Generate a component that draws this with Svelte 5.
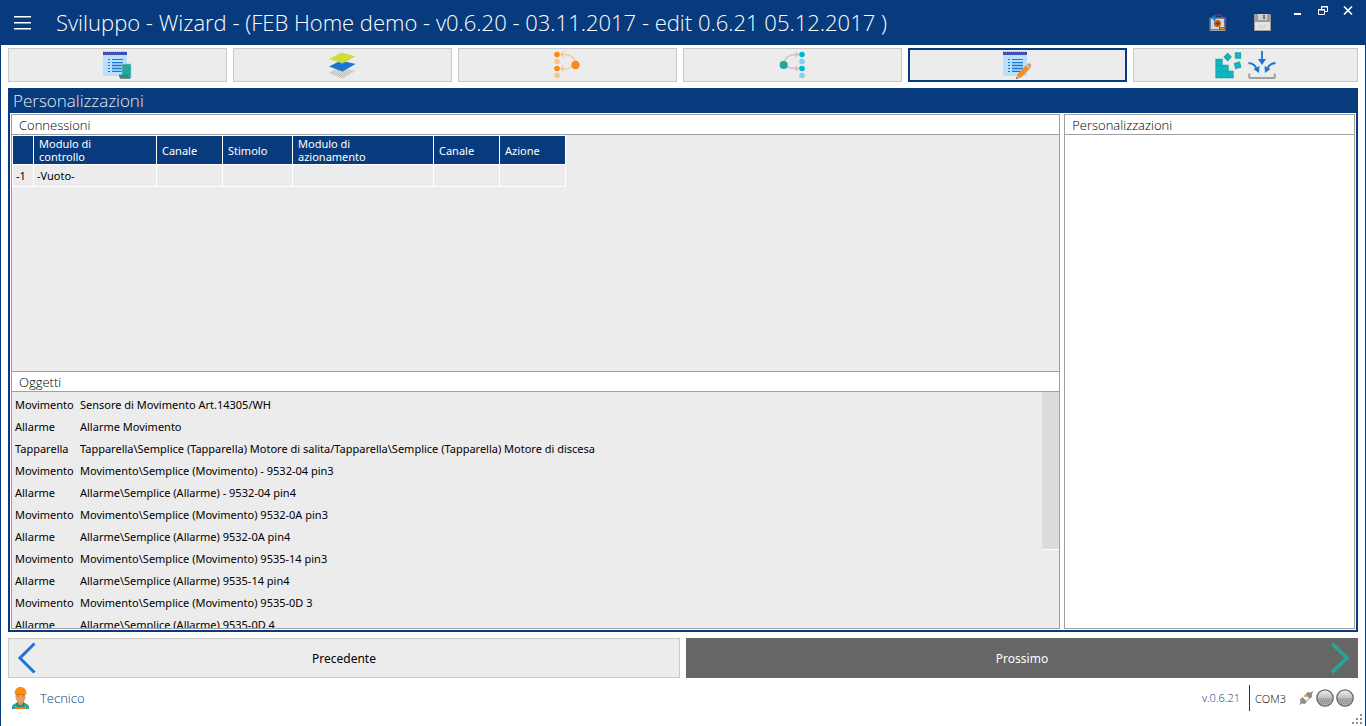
<script>
  const tabs = [
    { id: 'progetto', label: 'Progetto' },
    { id: 'livelli', label: 'Livelli' },
    { id: 'ingressi', label: 'Ingressi' },
    { id: 'uscite', label: 'Uscite' },
    { id: 'personalizzazioni', label: 'Personalizzazioni' },
    { id: 'scrittura', label: 'Scrittura' }
  ];
  let active = $state('personalizzazioni');

  const columns = [
    { label: '', width: 20 },
    { label: 'Modulo di controllo', width: 122 },
    { label: 'Canale', width: 65 },
    { label: 'Stimolo', width: 69 },
    { label: 'Modulo di azionamento', width: 140 },
    { label: 'Canale', width: 65 },
    { label: 'Azione', width: 65 }
  ];

  const connections = [['-1', '-Vuoto-', '', '', '', '', '']];

  const objects = [
    ['Movimento', 'Sensore di Movimento Art.14305/WH'],
    ['Allarme', 'Allarme Movimento'],
    ['Tapparella', 'Tapparella\\Semplice (Tapparella) Motore di salita/Tapparella\\Semplice (Tapparella) Motore di discesa'],
    ['Movimento', 'Movimento\\Semplice (Movimento) - 9532-04 pin3'],
    ['Allarme', 'Allarme\\Semplice (Allarme) - 9532-04 pin4'],
    ['Movimento', 'Movimento\\Semplice (Movimento) 9532-0A pin3'],
    ['Allarme', 'Allarme\\Semplice (Allarme) 9532-0A pin4'],
    ['Movimento', 'Movimento\\Semplice (Movimento) 9535-14 pin3'],
    ['Allarme', 'Allarme\\Semplice (Allarme) 9535-14 pin4'],
    ['Movimento', 'Movimento\\Semplice (Movimento) 9535-0D 3'],
    ['Allarme', 'Allarme\\Semplice (Allarme) 9535-0D 4']
  ];
</script>

{#snippet sheet()}
  <path d="M1 .5h24" stroke="#b5b5b5" stroke-dasharray="1 1" />
  <path d="M1 4h24v21H1z" fill="#bbdefb" />
  <path d="M1 1h24v3H1z" fill="#3f51b5" />
  <path d="M6 8.5h2M10 8.5h11M6 11.5h2M10 11.5h11M6 14.5h2M10 14.5h11M6 17.5h2M10 17.5h11M6 20.5h2M10 20.5h11" stroke="#1976d2" />
  <path d="M10 13h11M10 16h11M10 19h11" stroke="#64a9e6" />
{/snippet}

<div class="window">
  <header>
    <button class="plain menu" aria-label="Menu">
      <svg width="18" height="14" viewBox="0 0 18 14"><path d="M0 .7h17M0 6.700h17M0 12.700h17" stroke="#fff" stroke-width="1.400" /></svg>
    </button>
    <h1>Sviluppo - Wizard - (FEB Home demo - v0.6.20 - 03.11.2017 - edit 0.6.21 05.12.2017 )</h1>
    <div class="tools">
      <button class="plain" aria-label="Moduli">
        <svg width="18" height="18" viewBox="0 0 18 18">
          <path d="M4 3c3-3 7-3 10 0" fill="none" stroke="#7e4a78" />
          <path d="M1 4h15v12H1z" fill="#bbdefb" stroke="#6d6670" stroke-width="1.600" />
          <path d="M1 16.500h15.500" stroke="#9e9e9e" />
          <path d="M16 4v7" stroke="#8b4789" stroke-width="1.500" />
          <path d="M3 3l2-2 2 2-1 4H5z" fill="#1976d2" />
          <circle cx="8.500" cy="9.500" r="3.500" fill="#bf5b10" />
          <path d="M8.500 8v3M7 9.500h3" stroke="#7a3413" />
          <path d="M10 13h6v3h-6z" fill="#616161" />
          <path d="M11 14.500h4.500" stroke="#fb8c00" stroke-width="1.500" />
        </svg>
      </button>
      <button class="plain" aria-label="Salva">
        <svg width="18" height="18" viewBox="0 0 18 18">
          <path d="M0 0h16l1 1v16H0z" fill="#9e9e9e" />
          <path d="M4 0h9v6H4z" fill="#d0d0d0" />
          <path d="M9 1h2v4H9z" fill="#616161" />
          <path d="M9.500 2.500h1M9.500 4.500h.5" stroke="#ddd" stroke-width=".7" />
          <path d="M1 8h15v8H1z" fill="#e4e4e4" />
          <path d="M4 11.500h9M5 13.500h8" stroke="#bdbdbd" stroke-dasharray="1 1" />
        </svg>
      </button>
    </div>
    <div class="controls">
      <button class="plain" aria-label="Riduci a icona">
        <svg width="12" height="12" viewBox="0 0 12 12"><path d="M2 9h7" stroke="#fff" stroke-width="2" /></svg>
      </button>
      <button class="plain" aria-label="Ripristina">
        <svg width="12" height="12" viewBox="0 0 12 12">
          <path d="M4.500 4V1.500h6v5H8M4 2h7M1.500 4.500h6v5h-6zM1 5h7" fill="none" stroke="#fff" />
        </svg>
      </button>
      <button class="plain" aria-label="Chiudi">
        <svg width="12" height="12" viewBox="0 0 12 12"><path d="M2 1.500l8 8M10 1.500l-8 8" stroke="#fff" stroke-width="1.700" /></svg>
      </button>
    </div>
  </header>

  <main>
    <nav>
      {#each tabs as tab}
        <div class="slot">
          <button class="tab" class:active={active === tab.id} aria-label={tab.label} onclick={() => (active = tab.id)}>
            {#if tab.id === 'progetto'}
              <svg width="31" height="28" viewBox="0 0 31 28">
                {@render sheet()}
                <path d="M20 13h9v14H19v-3h1z" fill="#26a69a" stroke="#8fcfd0" stroke-width=".6" />
                <path d="M17 23.500h9v2.500h2v1.500h-9c-1.500 0-2-1.500-2-4z" fill="#1f9488" />
                <path d="M18 27.500h10" stroke="#888" />
              </svg>
            {:else if tab.id === 'livelli'}
              <svg width="31" height="28" viewBox="0 0 31 28">
                <defs>
                  <pattern id="mesh" width="2" height="2" patternUnits="userSpaceOnUse">
                    <path d="M0 0h1v1H0zM1 1h1v1H1z" fill="#bcbcbc" />
                    <path d="M1 0h1v1H1zM0 1h1v1H0z" fill="#e0e0e0" />
                  </pattern>
                </defs>
                <path d="M1.500 22l12-6 15 4L15 27.500z" fill="url(#mesh)" />
                <path d="M2 15.500l12-6 14.500 3.500L15.500 20.500z" fill="#1976d2" />
                <path d="M2 8l12.500-6.500 14 4-13 7z" fill="#cddc39" />
              </svg>
            {:else if tab.id === 'ingressi'}
              <svg width="31" height="28" viewBox="0 0 31 28">
                <g fill="none" stroke="#f6c68e" stroke-width="1.300">
                  <path d="M9 3.500c8-.5 13.500 2 14.500 8M9 17.500c5 .8 9 0 12-2" />
                  <path d="M11.500 1L9 3.500 11.500 6M11.500 15L9 17.500l2.500 2.500" />
                </g>
                <circle cx="5" cy="3.500" r="2.800" fill="#f98b14" />
                <circle cx="5" cy="10.500" r="2.800" fill="#f6c68e" />
                <circle cx="5" cy="17.500" r="2.800" fill="#f98b14" />
                <circle cx="5" cy="24.500" r="2.800" fill="#f6c68e" />
                <circle cx="23.500" cy="14" r="4.200" fill="#f98b14" />
              </svg>
            {:else if tab.id === 'uscite'}
              <svg width="31" height="28" viewBox="0 0 31 28">
                <g fill="none" stroke="#c6c6c6" stroke-width="1.500">
                  <path d="M6.500 11C9 5.500 13 3 21 3.500M8.500 15.500c4 2 8 2.300 12.500 2" />
                  <path d="M18.500 1.200L21 3.500l-2.500 2.300M18.500 15.200l2.500 2.300-2.500 2.300" />
                </g>
                <circle cx="6.700" cy="14" r="4.100" fill="#26a69a" />
                <circle cx="25" cy="3.500" r="2.800" fill="#00b4d8" />
                <circle cx="25" cy="10.500" r="2.800" fill="#88cdf2" />
                <circle cx="25" cy="17.500" r="2.800" fill="#00b4d8" />
                <circle cx="25" cy="24.500" r="2.800" fill="#88cdf2" />
              </svg>
            {:else if tab.id === 'personalizzazioni'}
              <svg width="31" height="28" viewBox="0 0 31 28">
                {@render sheet()}
                <path d="M14 28l1.500-5L24 14.500l3.500 3.500L19 26.500z" fill="#fb8c14" />
                <path d="M24 14.500l1.500-1.500 3.500 3.500-1.500 1.500z" fill="#b0bec5" />
                <path d="M25.500 13l1-.8c1.500-.4 3 1.300 2.700 2.500l-.4 1.600z" fill="#d98880" />
                <path d="M14 28l1.300-4.200 2.700 2.900z" fill="#e0a56a" />
                <path d="M14 28l.5-1.600 1.100 1.100z" fill="#4e4e4e" />
              </svg>
            {:else}
              <svg width="63" height="28" viewBox="0 0 63 28">
                <g fill="#00bcd4" stroke="#26a69a" stroke-width="1.300">
                  <path d="M2 8.500h6v6H2zM2 14.500h6v6H2zM2 20.500h6v6H2zM8 14.500h6v6H8zM8 20.500h6v6H8zM14 20.500h5v6h-5z" />
                  <path d="M13.700 2.500l3.300 3.500-3.300 3.500L10.300 6z" />
                  <path d="M21.500 2h5v5h-5zM20.500 12.500l5-1.500 1.200 5-5 1.500z" />
                </g>
                <g fill="none" stroke="#1976d2" stroke-width="1.800">
                  <path d="M48 0v10M34.500 12c5 .3 7.500 3 8.500 7M61.500 12c-5 .3-7.500 3-8.500 7" />
                </g>
                <path d="M44 8h8l-4 6zM39.500 18l6-3-.500 7zM56.500 18l-6-3 .500 7z" fill="#1976d2" />
                <path d="M35.200 22.500v3c0 1 .5 1.500 1.500 1.500h22.600c1 0 1.500-.5 1.500-1.500v-3" fill="none" stroke="#a0a0a0" stroke-width="2" />
              </svg>
            {/if}
          </button>
        </div>
      {/each}
    </nav>

    <section class="panel">
      <h2>Personalizzazioni</h2>
      <div class="body">
        <div class="left">
          <section class="group">
            <h3>Connessioni</h3>
            <div class="content">
              <table class="grid">
                <colgroup>
                  {#each columns as column}<col style="width: {column.width + 1}px" />{/each}
                </colgroup>
                <thead>
                  <tr>{#each columns as column}<th scope="col">{column.label}</th>{/each}</tr>
                </thead>
                <tbody>
                  {#each connections as row}
                    <tr>{#each row as cell}<td>{cell}</td>{/each}</tr>
                  {/each}
                </tbody>
              </table>
            </div>
          </section>
          <section class="group">
            <h3>Oggetti</h3>
            <div class="content scroller">
              <table class="list">
                <tbody>
                  {#each objects as [kind, name]}
                    <tr><td>{kind}</td><td>{name}</td></tr>
                  {/each}
                </tbody>
              </table>
              <div class="track"><div class="thumb"></div></div>
            </div>
          </section>
        </div>
        <section class="group">
          <h3>Personalizzazioni</h3>
        </section>
      </div>
    </section>

    <div class="steps">
      <button class="step">
        <svg width="20" height="32" viewBox="0 0 20 32"><path d="M17.500 1.500L3 16l14.500 14.500" fill="none" stroke="#1976d2" stroke-width="3" /></svg>
        <span>Precedente</span>
      </button>
      <button class="step next">
        <span>Prossimo</span>
        <svg width="20" height="32" viewBox="0 0 20 32"><path d="M3 1.500L18 16 3 30.500" fill="none" stroke="#26a69a" stroke-width="3.500" /></svg>
      </button>
    </div>
  </main>

  <footer>
    <svg width="18" height="23" viewBox="0 0 18 23">
      <path d="M0 22v-2c0-2 2-3.500 5-4h7c3 .5 5 2 5 4v2z" fill="#26a69a" />
      <path d="M5 14h7v4l-3.500 2L5 18z" fill="#db9a5b" />
      <path d="M4 16l2-1 2.500 3L11 15l2 1-1 3 1 3H4l1-3z" fill="#1b8f86" />
      <path d="M3 18.500l2 1.500v2H3zM14 18.500L12 20v2h2z" fill="#fb8c14" />
      <path d="M3 20h11v2H3z" fill="#f57c00" />
      <path d="M6 14h5v3l-2.500 1.500L6 17z" fill="#d99355" />
      <path d="M3.500 6h10v4c0 3.500-2.500 5.500-5 5.500s-5-2-5-5.500z" fill="#e3a15f" />
      <path d="M2.500 7c0-4.500 2.500-7 6-7s6 2.500 6 7z" fill="#fb8c14" />
      <path d="M4 7.500h9" stroke="#e17408" />
      <path d="M5.500 9h1M10.500 9h1" stroke="#784719" />
    </svg>
    <span class="user">Tecnico</span>
    <span class="version">v.0.6.21</span>
    <span class="port">COM3</span>
    <svg width="16" height="16" viewBox="0 0 16 16">
      <path d="M15.500 .5l-3 2-3-.5-2 2.500 4 4.500 2.500-2 0-3z" fill="#8e8e8e" />
      <path d="M.5 15.500l3-2 3.500 .5 2-2.500L4.500 7 2 9.500l.5 3z" fill="#8e8e8e" />
      <path d="M6 6.500l1-1 1.500 1.500M9 10.500l1.500-1.500" fill="none" stroke="#fb9a1e" stroke-width="1.500" />
    </svg>
    {#each [1, 2] as lamp}
      <svg class="lamp" width="18" height="18" viewBox="0 0 18 18">
        <defs>
          <linearGradient id="lamp{lamp}" x1="0" y1="0" x2="0" y2="1">
            <stop offset="0" stop-color="#f0f0f0" /><stop offset=".5" stop-color="#c0c0c0" />
            <stop offset=".55" stop-color="#a0a0a0" /><stop offset="1" stop-color="#b4b4b4" />
          </linearGradient>
        </defs>
        <circle cx="9" cy="9" r="8.200" fill="url(#lamp{lamp})" stroke="#6a6a6a" stroke-width="1.300" />
        <path d="M4 12.500h10M5 14.500h8" stroke="#8a8a8a" stroke-dasharray="1 1" />
      </svg>
    {/each}
    <svg class="grip" width="10" height="10" viewBox="0 0 10 10">
      <path d="M8 0h2v2H8zM4 4h2v2H4zM8 4h2v2H8zM0 8h2v2H0zM4 8h2v2H4zM8 8h2v2H8z" fill="#8c8c8c" />
    </svg>
  </footer>
</div>

<style>
  :global(body) {
    margin: 0;
  }
  .window {
    --navy: #073b7d;
    --face: #ececec;
    --line: #a0a0a0;
    box-sizing: border-box;
    height: 100vh;
    min-height: 400px;
    display: flex;
    flex-direction: column;
    background: #fff;
    border: solid var(--navy);
    border-width: 0 1px;
    font-family: 'Noto Sans', 'Open Sans', sans-serif;
    font-size: 11px;
    color: #000;
  }
  .window * {
    box-sizing: border-box;
  }
  svg {
    display: block;
    flex: none;
  }
  h1, h2, h3 {
    margin: 0;
    font-family: 'Open Sans', 'Noto Sans', sans-serif;
    font-weight: 300;
    white-space: nowrap;
  }
  button {
    font: inherit;
    color: inherit;
    padding: 0;
    margin: 0;
    cursor: pointer;
  }
  .plain {
    border: 0;
    background: none;
  }
  header {
    flex: none;
    height: 45px;
    display: flex;
    align-items: center;
    background: var(--navy);
    color: #fff;
  }
  .menu {
    padding: 0 13px;
  }
  h1 {
    flex: 1;
    min-width: 0;
    overflow: hidden;
    padding-left: 11px;
    font-size: 22px;
    line-height: 45px;
  }
  .tools {
    display: flex;
    gap: 27px;
    margin-right: 20px;
  }
  .controls {
    display: flex;
    gap: 13px;
    align-self: flex-start;
    padding: 5px 11px 0 0;
  }
  main {
    flex: 1;
    min-height: 0;
    display: flex;
    flex-direction: column;
    gap: 6px;
    padding: 3px 7px 0;
  }
  nav {
    display: grid;
    grid-template-columns: repeat(6, 1fr);
  }
  .slot {
    padding-right: 6px;
  }
  .slot:last-child {
    padding-right: 0;
  }
  .tab {
    width: 100%;
    height: 34px;
    display: flex;
    align-items: center;
    justify-content: center;
    background: var(--face);
    border: 1px solid #c9c9c9;
  }
  .tab.active {
    border: 2px solid var(--navy);
  }
  .panel {
    flex: 1;
    min-height: 0;
    display: flex;
    flex-direction: column;
    border: 2px solid var(--navy);
    border-top: 0;
  }
  h2 {
    padding: 1px 0 0 3px;
    font-size: 17px;
    line-height: 24px;
    color: #e6edf7;
    background: var(--navy);
  }
  .body {
    flex: 1;
    min-height: 0;
    display: grid;
    grid-template-columns: 1050fr 291fr;
    gap: 4px;
    padding: 1px 1px 1px 1px;
  }
  .left {
    min-height: 0;
    display: grid;
    grid-template-rows: 257fr 258fr;
  }
  .group {
    min-height: 0;
    display: flex;
    flex-direction: column;
    border: 1px solid var(--line);
  }
  .left .group:first-child {
    border-bottom: 0;
  }
  h3 {
    padding: 2px 0 0 7px;
    font-size: 13px;
    line-height: 17px;
    border-bottom: 1px solid var(--line);
  }
  .content {
    flex: 1;
    min-height: 0;
    overflow: hidden;
    background: var(--face);
  }
  table {
    border-collapse: separate;
    border-spacing: 0;
  }
  .grid {
    table-layout: fixed;
    width: 554px;
    border: solid #fff;
    border-width: 1px 0 0 1px;
  }
  th, .grid td {
    border: solid #fff;
    border-width: 0 1px 1px 0;
    text-align: left;
    font-weight: 400;
  }
  th {
    height: 29px;
    padding: 0 0 0 5px;
    line-height: 13px;
    color: #fff;
    background: var(--navy);
  }
  th:nth-child(2), th:nth-child(5) {
    padding-right: 50px;
  }
  .grid td {
    height: 22px;
    padding: 0 0 0 3px;
  }
  .scroller {
    display: flex;
    justify-content: space-between;
    align-items: flex-start;
  }
  .list {
    margin-top: 1px;
  }
  .list td {
    height: 22px;
    padding: 0 0 0 3px;
    white-space: nowrap;
  }
  .list td:first-child {
    width: 65px;
  }
  .track {
    flex: none;
    width: 17px;
    height: 100%;
  }
  .thumb {
    height: 67%;
    background: #dcdcdc;
    border-bottom: 1px solid #fff;
  }
  .steps {
    display: grid;
    grid-template-columns: 1fr 1fr;
    gap: 6px;
  }
  .step {
    height: 40px;
    display: grid;
    grid-template-columns: 20px 1fr 20px;
    align-items: center;
    padding: 0 8px;
    font-size: 12px;
    line-height: 18px;
    background: var(--face);
    border: 1px solid #c9c9c9;
  }
  .step span {
    grid-column: 2;
    padding-top: 2px;
    text-align: center;
  }
  .next {
    color: #fff;
    background: #666;
    border-color: #666;
  }
  footer {
    position: relative;
    flex: none;
    height: 48px;
    display: flex;
    align-items: center;
    padding: 0 11px 8px 11px;
    font-family: 'Open Sans', 'Noto Sans', sans-serif;
  }
  .user {
    flex: 1;
    padding-left: 10px;
    font-size: 13px;
    font-weight: 300;
    color: var(--navy);
  }
  .version {
    padding-right: 9px;
    line-height: 26px;
    font-weight: 300;
    color: var(--navy);
    border-right: 1px solid var(--navy);
  }
  .port {
    padding: 0 12px 0 5px;
    font-weight: 300;
  }
  .lamp {
    margin-left: 2px;
  }
  .grip {
    position: absolute;
    right: 3px;
    bottom: 2px;
  }
</style>
